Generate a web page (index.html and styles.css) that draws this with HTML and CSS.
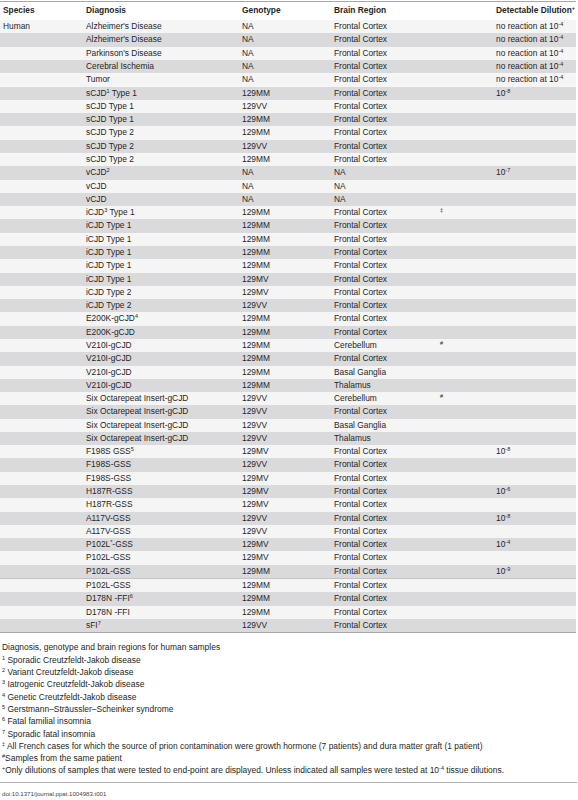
FILE: index.html
```html
<!DOCTYPE html>
<html lang="en">
<head>
    <meta charset="UTF-8">
    <meta name="viewport" content="width=device-width, initial-scale=1.0">
    <title>Table 1 - Human samples</title>
    <link rel="stylesheet" href="styles.css">
</head>
<body>
    <div class="page">
        <table class="samples">
            <colgroup>
                <col class="col-species">
                <col class="col-diagnosis">
                <col class="col-genotype">
                <col class="col-region">
                <col class="col-mark">
                <col class="col-dilution">
            </colgroup>
            <thead>
                <tr>
                    <th>Species</th>
                    <th>Diagnosis</th>
                    <th>Genotype</th>
                    <th>Brain Region</th>
                    <th></th>
                    <th>Detectable Dilution<sup>+</sup></th>
                </tr>
            </thead>
            <tbody>
                <tr><td>Human</td><td>Alzheimer's Disease</td><td>NA</td><td>Frontal Cortex</td><td></td><td>no reaction at 10<sup>-4</sup></td></tr>
                <tr><td></td><td>Alzheimer's Disease</td><td>NA</td><td>Frontal Cortex</td><td></td><td>no reaction at 10<sup>-4</sup></td></tr>
                <tr><td></td><td>Parkinson's Disease</td><td>NA</td><td>Frontal Cortex</td><td></td><td>no reaction at 10<sup>-4</sup></td></tr>
                <tr><td></td><td>Cerebral Ischemia</td><td>NA</td><td>Frontal Cortex</td><td></td><td>no reaction at 10<sup>-4</sup></td></tr>
                <tr><td></td><td>Tumor</td><td>NA</td><td>Frontal Cortex</td><td></td><td>no reaction at 10<sup>-4</sup></td></tr>
                <tr><td></td><td>sCJD<sup>1</sup> Type 1</td><td>129MM</td><td>Frontal Cortex</td><td></td><td>10<sup>-8</sup></td></tr>
                <tr><td></td><td>sCJD Type 1</td><td>129VV</td><td>Frontal Cortex</td><td></td><td></td></tr>
                <tr><td></td><td>sCJD Type 1</td><td>129MM</td><td>Frontal Cortex</td><td></td><td></td></tr>
                <tr><td></td><td>sCJD Type 2</td><td>129MM</td><td>Frontal Cortex</td><td></td><td></td></tr>
                <tr><td></td><td>sCJD Type 2</td><td>129VV</td><td>Frontal Cortex</td><td></td><td></td></tr>
                <tr><td></td><td>sCJD Type 2</td><td>129MM</td><td>Frontal Cortex</td><td></td><td></td></tr>
                <tr><td></td><td>vCJD<sup>2</sup></td><td>NA</td><td>NA</td><td></td><td>10<sup>-7</sup></td></tr>
                <tr><td></td><td>vCJD</td><td>NA</td><td>NA</td><td></td><td></td></tr>
                <tr><td></td><td>vCJD</td><td>NA</td><td>NA</td><td></td><td></td></tr>
                <tr><td></td><td>iCJD<sup>3</sup> Type 1</td><td>129MM</td><td>Frontal Cortex</td><td><sup>‡</sup></td><td></td></tr>
                <tr><td></td><td>iCJD Type 1</td><td>129MM</td><td>Frontal Cortex</td><td></td><td></td></tr>
                <tr><td></td><td>iCJD Type 1</td><td>129MM</td><td>Frontal Cortex</td><td></td><td></td></tr>
                <tr><td></td><td>iCJD Type 1</td><td>129MM</td><td>Frontal Cortex</td><td></td><td></td></tr>
                <tr><td></td><td>iCJD Type 1</td><td>129MM</td><td>Frontal Cortex</td><td></td><td></td></tr>
                <tr><td></td><td>iCJD Type 1</td><td>129MV</td><td>Frontal Cortex</td><td></td><td></td></tr>
                <tr><td></td><td>iCJD Type 2</td><td>129MV</td><td>Frontal Cortex</td><td></td><td></td></tr>
                <tr><td></td><td>iCJD Type 2</td><td>129VV</td><td>Frontal Cortex</td><td></td><td></td></tr>
                <tr><td></td><td>E200K-gCJD<sup>4</sup></td><td>129MM</td><td>Frontal Cortex</td><td></td><td></td></tr>
                <tr><td></td><td>E200K-gCJD</td><td>129MM</td><td>Frontal Cortex</td><td></td><td></td></tr>
                <tr><td></td><td>V210I-gCJD</td><td>129MM</td><td>Cerebellum</td><td><sup>#</sup></td><td></td></tr>
                <tr><td></td><td>V210I-gCJD</td><td>129MM</td><td>Frontal Cortex</td><td></td><td></td></tr>
                <tr><td></td><td>V210I-gCJD</td><td>129MM</td><td>Basal Ganglia</td><td></td><td></td></tr>
                <tr><td></td><td>V210I-gCJD</td><td>129MM</td><td>Thalamus</td><td></td><td></td></tr>
                <tr><td></td><td>Six Octarepeat Insert-gCJD</td><td>129VV</td><td>Cerebellum</td><td><sup>#</sup></td><td></td></tr>
                <tr><td></td><td>Six Octarepeat Insert-gCJD</td><td>129VV</td><td>Frontal Cortex</td><td></td><td></td></tr>
                <tr><td></td><td>Six Octarepeat Insert-gCJD</td><td>129VV</td><td>Basal Ganglia</td><td></td><td></td></tr>
                <tr><td></td><td>Six Octarepeat Insert-gCJD</td><td>129VV</td><td>Thalamus</td><td></td><td></td></tr>
                <tr><td></td><td>F198S GSS<sup>5</sup></td><td>129MV</td><td>Frontal Cortex</td><td></td><td>10<sup>-8</sup></td></tr>
                <tr><td></td><td>F198S-GSS</td><td>129VV</td><td>Frontal Cortex</td><td></td><td></td></tr>
                <tr><td></td><td>F198S-GSS</td><td>129MV</td><td>Frontal Cortex</td><td></td><td></td></tr>
                <tr><td></td><td>H187R-GSS</td><td>129MV</td><td>Frontal Cortex</td><td></td><td>10<sup>-6</sup></td></tr>
                <tr><td></td><td>H187R-GSS</td><td>129MV</td><td>Frontal Cortex</td><td></td><td></td></tr>
                <tr><td></td><td>A117V-GSS</td><td>129VV</td><td>Frontal Cortex</td><td></td><td>10<sup>-8</sup></td></tr>
                <tr><td></td><td>A117V-GSS</td><td>129VV</td><td>Frontal Cortex</td><td></td><td></td></tr>
                <tr><td></td><td>P102L<sup>*</sup>-GSS</td><td>129MV</td><td>Frontal Cortex</td><td></td><td>10<sup>-4</sup></td></tr>
                <tr><td></td><td>P102L-GSS</td><td>129MV</td><td>Frontal Cortex</td><td></td><td></td></tr>
                <tr class="split"><td></td><td>P102L-GSS</td><td>129MM</td><td>Frontal Cortex</td><td></td><td>10<sup>-9</sup></td></tr>
                <tr><td></td><td>P102L-GSS</td><td>129MM</td><td>Frontal Cortex</td><td></td><td></td></tr>
                <tr><td></td><td>D178N -FFI<sup>6</sup></td><td>129MM</td><td>Frontal Cortex</td><td></td><td></td></tr>
                <tr><td></td><td>D178N -FFI</td><td>129MM</td><td>Frontal Cortex</td><td></td><td></td></tr>
                <tr><td></td><td>sFI<sup>7</sup></td><td>129VV</td><td>Frontal Cortex</td><td></td><td></td></tr>
            </tbody>
        </table>

        <!-- Footnotes -->
        <div class="notes">
            <p>Diagnosis, genotype and brain regions for human samples</p>
            <p><sup>1</sup> Sporadic Creutzfeldt-Jakob disease</p>
            <p><sup>2</sup> Variant Creutzfeldt-Jakob disease</p>
            <p><sup>3</sup> Iatrogenic Creutzfeldt-Jakob disease</p>
            <p><sup>4</sup> Genetic Creutzfeldt-Jakob disease</p>
            <p><sup>5</sup> Gerstmann–Sträussler–Scheinker syndrome</p>
            <p><sup>6</sup> Fatal familial insomnia</p>
            <p><sup>7</sup> Sporadic fatal insomnia</p>
            <p><sup>‡</sup> All French cases for which the source of prion contamination were growth hormone (7 patients) and dura matter graft (1 patient)</p>
            <p><sup>#</sup>Samples from the same patient</p>
            <p><sup>+</sup>Only dilutions of samples that were tested to end-point are displayed. Unless indicated all samples were tested at 10<sup>-4</sup> tissue dilutions.</p>
        </div>

        <div class="doi">doi:10.1371/journal.ppat.1004983.t001</div>
    </div>
</body>
</html>
```

FILE: styles.css
```css
body {
    margin: 0;
    padding: 0;
    background-color: #ffffff;
    color: #262626;
    font-family: "Liberation Sans", Arial, sans-serif;
}

.page {
    width: 577px;
    padding-top: 1px;
}

sup {
    font-size: 5.5px;
    line-height: 0;
    vertical-align: 3px;
}

/* Table */
.samples {
    width: 576px;
    table-layout: fixed;
    border-collapse: collapse;
    border-top: 1px solid #a8a8a8;
    border-bottom: 1px solid #a8a8a8;
    font-size: 8.4px;
}

.col-species { width: 83px; }
.col-diagnosis { width: 156px; }
.col-genotype { width: 92px; }
.col-region { width: 106px; }
.col-mark { width: 56px; }
.col-dilution { width: 83px; }

.samples th {
    height: 18.7px;
    padding: 1px 0 0 3px;
    box-sizing: border-box;
    line-height: 14px;
    vertical-align: top;
    text-align: left;
    font-weight: bold;
    white-space: nowrap;
    background-color: #ffffff;
}

.samples td {
    height: 13.28px;
    padding: 0 0 0 3px;
    line-height: 13.28px;
    white-space: nowrap;
    overflow: hidden;
}

.samples tbody tr:nth-child(odd) {
    background-color: #f5f5f6;
}

.samples tbody tr:nth-child(even) {
    background-color: #dadadc;
}

.samples tr.split td {
    border-bottom: 1px solid #c4c4c4;
}

/* Notes */
.notes {
    margin-top: 8.3px;
    padding-left: 2px;
    font-size: 8.45px;
    line-height: 12.3px;
    padding-bottom: 5px;
    border-bottom: 1px solid #b0b0b0;
}

.notes p {
    margin: 0;
    white-space: nowrap;
}

.doi {
    padding: 5px 0 0 2px;
    font-size: 6.1px;
    line-height: 12px;
    color: #444444;
}
```
